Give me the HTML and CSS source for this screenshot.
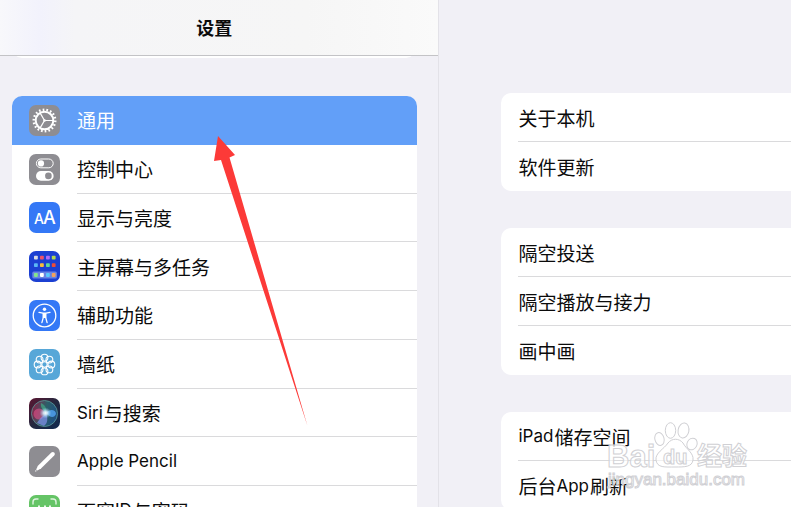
FILE: index.html
```html
<!DOCTYPE html>
<html lang="zh-CN">
<head>
  <meta charset="UTF-8" />
  <meta name="viewport" content="width=device-width, initial-scale=1.0" />
  <title>设置</title>
  <link rel="stylesheet" href="styles.css">
</head>
<body>
  <div class="app">
    <aside class="sidebar">
      <header class="topbar">
        <h1>设置</h1>
      </header>
      <div class="prev-group"></div>
      <nav class="menu">
        <a class="item active" href="#general">
          <svg class="icon" viewBox="0 0 31 31" fill="none" stroke="#fff">
            <rect width="31" height="31" rx="7" fill="#8e8d92" stroke="none"/>
            <circle cx="15.5" cy="15.5" r="8.8" stroke-width="2"/>
            <circle cx="15.5" cy="15.5" r="10.8" stroke-width="2.4" pathLength="72" stroke-dasharray="1.8 2.2"/>
            <path d="M15.5 15.5H24M15.5 15.5L11.2 8.1M15.5 15.5L11.2 22.9" stroke-width="1.2"/>
            <circle cx="15.5" cy="15.5" r="1.3" fill="#fff" stroke="none"/>
          </svg>
          <span class="label">通用</span>
        </a>
        <a class="item" href="#control">
          <svg class="icon" viewBox="0 0 31 31">
            <rect width="31" height="31" rx="7" fill="#8e8d92"/>
            <rect x="7.4" y="5" width="16.8" height="8.8" rx="4.4" fill="none" stroke="#fff"/>
            <circle cx="12" cy="9.4" r="3.1" fill="#fff"/>
            <rect x="7" y="17" width="17.6" height="9.8" rx="4.9" fill="#fff"/>
            <circle cx="19.4" cy="21.9" r="3.3" fill="#8e8d92"/>
          </svg>
          <span class="label">控制中心</span>
        </a>
        <a class="item" href="#display">
          <svg class="icon" viewBox="0 0 31 31">
            <rect width="31" height="31" rx="7" fill="#3478f6"/>
            <g class="aa" fill="#fff">
              <text x="5" y="22" font-size="14">A</text>
              <text x="14" y="22" font-size="18">A</text>
            </g>
          </svg>
          <span class="label">显示与亮度</span>
        </a>
        <a class="item" href="#home">
          <svg class="icon" viewBox="0 0 31 31">
            <rect width="31" height="31" rx="7" fill="#1c40d2"/>
            <rect x="3.3" y="20.6" width="24.6" height="7" rx="1.6" fill="#6883e3"/>
            <rect x="5" y="4.8" width="3.8" height="3.8" rx=".8" fill="#d9dbe3"/>
            <rect x="11" y="4.8" width="3.8" height="3.8" rx=".8" fill="#ef5268"/>
            <rect x="17" y="4.8" width="3.8" height="3.8" rx=".8" fill="#b06cf5"/>
            <rect x="22.8" y="4.8" width="3.8" height="3.8" rx=".8" fill="#b5d84e"/>
            <rect x="5" y="12.3" width="3.8" height="3.8" rx=".8" fill="#5bb8f5"/>
            <rect x="11" y="12.3" width="3.8" height="3.8" rx=".8" fill="#f7bb3d"/>
            <rect x="17" y="12.3" width="3.8" height="3.8" rx=".8" fill="#5cd79c"/>
            <rect x="22.8" y="12.3" width="3.8" height="3.8" rx=".8" fill="#ee4c37"/>
            <rect x="5" y="22.1" width="3.8" height="3.8" rx=".8" fill="#84e68a"/>
            <rect x="11" y="22.1" width="3.8" height="3.8" rx=".8" fill="#fff"/>
            <rect x="17" y="22.1" width="3.8" height="3.8" rx=".8" fill="#5bc8fa"/>
            <rect x="22.8" y="22.1" width="3.8" height="3.8" rx=".8" fill="#f3a25b"/>
          </svg>
          <span class="label">主屏幕与多任务</span>
        </a>
        <a class="item" href="#accessibility">
          <svg class="icon" viewBox="0 0 31 31">
            <rect width="31" height="31" rx="7" fill="#3478f6"/>
            <circle cx="15.5" cy="15.5" r="11.3" fill="none" stroke="#fff" stroke-width="1.3"/>
            <circle cx="15.5" cy="9.2" r="1.7" fill="#fff"/>
            <path d="M10 12.4L14 13.2H17L21 12.4M14.3 13.5V17.5L12.9 22.6M16.7 13.5V17.5L18.1 22.6" fill="none" stroke="#fff" stroke-width="1.3" stroke-linecap="round"/>
            <path d="M13.8 13H17.2V18H13.8Z" fill="#fff"/>
          </svg>
          <span class="label">辅助功能</span>
        </a>
        <a class="item" href="#wallpaper">
          <svg class="icon" viewBox="0 0 31 31">
            <rect width="31" height="31" rx="7" fill="#57a7d8"/>
            <g fill="none" stroke="#fff" stroke-width="1.1">
              <circle cx="15.5" cy="15.5" r="2.7"/>
              <circle cx="15.5" cy="8.6" r="3.4"/>
              <circle cx="20.4" cy="10.6" r="3.4"/>
              <circle cx="22.4" cy="15.5" r="3.4"/>
              <circle cx="20.4" cy="20.4" r="3.4"/>
              <circle cx="15.5" cy="22.4" r="3.4"/>
              <circle cx="10.6" cy="20.4" r="3.4"/>
              <circle cx="8.6" cy="15.5" r="3.4"/>
              <circle cx="10.6" cy="10.6" r="3.4"/>
            </g>
          </svg>
          <span class="label">墙纸</span>
        </a>
        <a class="item" href="#siri">
          <svg class="icon" viewBox="0 0 31 31">
            <defs>
              <linearGradient id="siriBg" x1="0" y1="0" x2="1" y2="1">
                <stop offset="0" stop-color="#5c1530"/>
                <stop offset=".5" stop-color="#23283f"/>
                <stop offset="1" stop-color="#102a50"/>
              </linearGradient>
              <linearGradient id="siriOrb" x1="0" y1=".3" x2="1" y2=".6">
                <stop offset="0" stop-color="#8c2148"/>
                <stop offset=".5" stop-color="#2c5f68"/>
                <stop offset="1" stop-color="#1f4f86"/>
              </linearGradient>
              <radialGradient id="siriGlow">
                <stop offset="0" stop-color="#fff"/>
                <stop offset=".35" stop-color="#d6f1ff" stop-opacity=".85"/>
                <stop offset="1" stop-color="#8ccdf0" stop-opacity="0"/>
              </radialGradient>
            </defs>
            <rect width="31" height="31" rx="7" fill="url(#siriBg)"/>
            <circle cx="15.5" cy="15.5" r="13" fill="url(#siriOrb)" stroke="#5a9b98" stroke-width=".8"/>
            <circle cx="10" cy="16" r="5.5" fill="#e84e88" opacity=".6"/>
            <path d="M17 15C21 10 27 12 27 16C25 21 20 19 17 15Z" fill="#4c9be8" opacity=".9"/>
            <path d="M8 25C12 18 15 18 17 15C19 20 19 25 15 28Z" fill="#8391ed" opacity=".7"/>
            <path d="M17 15C14 12 11 9 12 5C16 7 18 10 17 15Z" fill="#40aa87" opacity=".7"/>
            <ellipse cx="16.5" cy="15" rx="6" ry="5.5" fill="url(#siriGlow)"/>
          </svg>
          <span class="label"><span class="en">Siri</span>与搜索</span>
        </a>
        <a class="item" href="#pencil">
          <svg class="icon" viewBox="0 0 31 31">
            <rect width="31" height="31" rx="7" fill="#8e8d92"/>
            <path d="M10.6 21L23.8 8" stroke="#fff" stroke-width="4" stroke-linecap="round"/>
            <path d="M9.1 19.7L12 22.5L8.3 24.6L7.1 23.4Z" fill="#fff"/>
            <path d="M6.7 24L7.9 25.1L5.9 25.8Z" fill="#fff"/>
          </svg>
          <span class="label"><span class="en">Apple Pencil</span></span>
        </a>
        <a class="item" href="#faceid">
          <svg class="icon" viewBox="0 0 31 31">
            <rect width="31" height="31" rx="7" fill="#65c466"/>
            <path d="M4 9V7Q4 4 7 4H9M22 4H24Q27 4 27 7V9M27 22V24Q27 27 24 27H22M9 27H7Q4 27 4 24V22" fill="none" stroke="#fff" stroke-opacity=".8" stroke-width="1.4" stroke-linecap="round"/>
            <path d="M10 11V13M21 11V13M16 11V17H14.5M10.5 20.5Q15.5 25 20.5 20.5" fill="none" stroke="#fff" stroke-width="1.7" stroke-linecap="round"/>
          </svg>
          <span class="label">面容<span class="en">ID</span>与密码</span>
        </a>
      </nav>
    </aside>

    <main class="detail">
      <section class="group">
        <a class="row" href="#about">关于本机</a>
        <a class="row" href="#update">软件更新</a>
      </section>
      <section class="group">
        <a class="row" href="#airdrop">隔空投送</a>
        <a class="row" href="#airplay">隔空播放与接力</a>
        <a class="row" href="#pip">画中画</a>
      </section>
      <section class="group">
        <a class="row" href="#storage"><span class="en">iPad</span>储存空间</a>
        <a class="row" href="#refresh">后台<span class="en">App</span>刷新</a>
      </section>
    </main>
  </div>

  <svg class="arrow" viewBox="0 0 94 291">
    <path d="M4 0L21 19L15.500 21.500L93.500 290L7 24L0 25Z" fill="#fc3a38"/>
  </svg>

  <svg class="watermark" viewBox="0 0 146 70">
    <g class="mark">
      <text x="1" y="47" font-size="31">Bai</text>
      <ellipse cx="53.500" cy="19" rx="4.600" ry="6.500" transform="rotate(-15 53.500 19)"/>
      <ellipse cx="64.500" cy="10.500" rx="5.200" ry="7.800"/>
      <ellipse cx="77.500" cy="10.500" rx="5.400" ry="7.600" transform="rotate(10 77.500 10.500)"/>
      <ellipse cx="86" cy="24" rx="5" ry="6" transform="rotate(25 86 24)"/>
      <path d="M62 23C66 18 73 18 77 23C80 29 88 33 87 40C86 47 79 47 69 47C59 47 51 48 50 40C49 33 58 29 62 23Z"/>
      <text x="57" y="44" font-size="20">du</text>
      <text x="91" y="45" font-size="25">经验</text>
    </g>
    <text class="url" x="2" y="65" font-size="17">jingyan.baidu.com</text>
  </svg>
</body>
</html>
```
FILE: styles.css
```css
* {
  box-sizing: border-box;
}
body {
  margin: 0;
  height: 100vh;
  overflow: hidden;
  position: relative;
  background: #f1f0f6;
  color: #0b0b0b;
  font-family: "Noto Sans CJK SC", sans-serif;
  font-size: 19px;
}
a {
  color: inherit;
  text-decoration: none;
}
.en {
  margin: 0 1px 0 0;
  font-family: Inter, sans-serif;
  font-size: 17px;
}
.app {
  display: grid;
  grid-template-columns: 5fr 4fr;
  height: 100%;
}

/* left side */
.sidebar {
  border-right: 1px solid #e3e2e8;
  overflow: hidden;
}
.topbar {
  position: relative;
  z-index: 1;
  height: 56px;
  display: flex;
  align-items: center;
  justify-content: center;
  padding: 0 10px 2px 0;
  background: linear-gradient(90deg, #f8f8fb 0, #f2f2fc 40px, #f5f5f7 75px, #f6f6f6 70%, #fafafa);
  border-bottom: 1px solid #c3c3c6;
}
h1 {
  margin: 0;
  font-size: 18px;
  font-weight: 700;
}
.prev-group {
  height: 20px;
  margin: -18px 22px 38px 12px;
  background: #fff;
  border-radius: 10px;
}
.menu {
  display: grid;
  grid-auto-rows: 1fr;
  min-height: 439px;
  margin: 0 21px 0 12px;
  background: #fff;
  border-radius: 10px;
  overflow: hidden;
}
.item {
  display: flex;
  align-items: center;
  gap: 17px;
  padding-left: 17px;
}
.label {
  flex: 1;
  align-self: stretch;
  display: flex;
  align-items: center;
  border-bottom: 1px solid #dadadc;
}
.item.active {
  background: #629ff8;
  color: #fff;
}
.item.active .label {
  border-color: transparent;
}
.icon {
  width: 31px;
  height: 31px;
  flex: none;
}
.aa {
  font-family: Inter, sans-serif;
  font-weight: 500;
}

/* right side */
.detail {
  display: flex;
  flex-direction: column;
  gap: 37px;
  padding: 93px 0 0 62px;
  overflow: hidden;
}
.group {
  flex: none;
  padding-left: 17px;
  background: #fff;
  border-radius: 10px 0 0 10px;
}
.row {
  display: flex;
  align-items: center;
  height: 49px;
  border-bottom: 1px solid #dadadc;
}
.row:last-child {
  border-bottom: none;
}

/* overlays */
.arrow {
  position: absolute;
  left: 214px;
  top: 136px;
  width: 94px;
  height: 291px;
  pointer-events: none;
}
.watermark {
  position: absolute;
  left: 606px;
  top: 420px;
  width: 146px;
  height: 70px;
  overflow: visible;
  pointer-events: none;
}
.mark {
  font-family: "Liberation Sans", "Noto Sans CJK SC", sans-serif;
  font-weight: 700;
  fill: #fff;
  fill-opacity: 0.6;
  stroke: #d0d0d4;
}
.url {
  font-family: "Liberation Sans", sans-serif;
  fill: #fff;
  fill-opacity: 0.6;
  stroke: #d0d0d4;
  stroke-width: 1px;
}
```
